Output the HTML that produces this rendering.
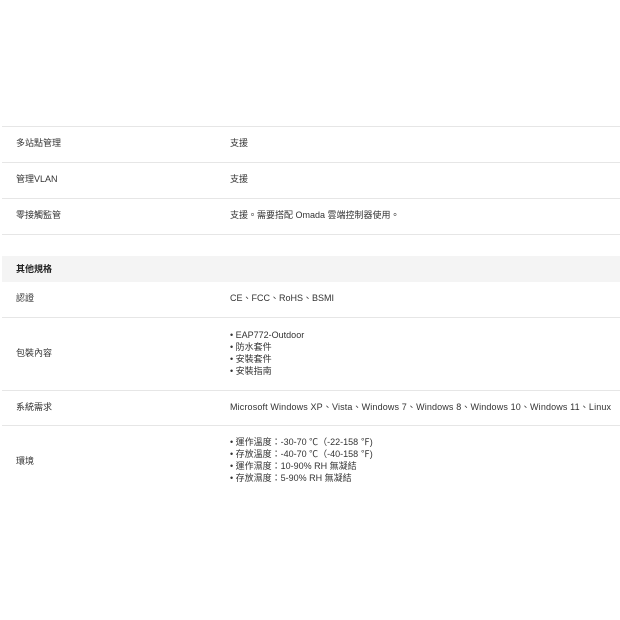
<!DOCTYPE html>
<html><head><meta charset="utf-8"><style>
body{margin:0;width:620px;height:620px;background:#fff;font-family:"Liberation Sans","Noto Sans CJK TC",sans-serif;font-size:9px;color:#333;position:relative;overflow:hidden}
.l{position:absolute;left:2px;right:0;height:1px;background:#e6e6e6}
.t{position:absolute;line-height:12px;white-space:nowrap}
.k{left:16px}.v{left:230px}
.band{position:absolute;left:2px;right:0;top:256px;height:26px;background:#f4f4f4}
</style></head><body>
<div class="l" style="top:126px"></div>
<div class="l" style="top:162px"></div>
<div class="l" style="top:198px"></div>
<div class="l" style="top:234px"></div>
<div class="t k" style="top:137px">多站點管理</div><div class="t v" style="top:137px">支援</div>
<div class="t k" style="top:173px">管理VLAN</div><div class="t v" style="top:173px">支援</div>
<div class="t k" style="top:209px">零接觸監管</div><div class="t v" style="top:209px">支援。需要搭配 Omada 雲端控制器使用。</div>
<div class="band"></div>
<div class="t k" style="top:263px;font-weight:bold;color:#222">其他規格</div>
<div class="t k" style="top:292px">認證</div><div class="t v" style="top:292px">CE、FCC、RoHS、BSMI</div>
<div class="l" style="top:317px"></div>
<div class="t k" style="top:347px">包裝內容</div>
<div class="t v" style="top:329px">• EAP772-Outdoor<br>• 防水套件<br>• 安裝套件<br>• 安裝指南</div>
<div class="l" style="top:390px"></div>
<div class="t k" style="top:401px">系統需求</div><div class="t v" style="top:401px;letter-spacing:0.14px">Microsoft Windows XP、Vista、Windows 7、Windows 8、Windows 10、Windows 11、Linux</div>
<div class="l" style="top:425px"></div>
<div class="t k" style="top:455px">環境</div>
<div class="t v" style="top:436px">• 運作溫度：-30-70 ℃（-22-158 ℉)<br>• 存放溫度：-40-70 ℃（-40-158 ℉)<br>• 運作濕度：10-90% RH 無凝結<br>• 存放濕度：5-90% RH 無凝結</div>
</body></html>
